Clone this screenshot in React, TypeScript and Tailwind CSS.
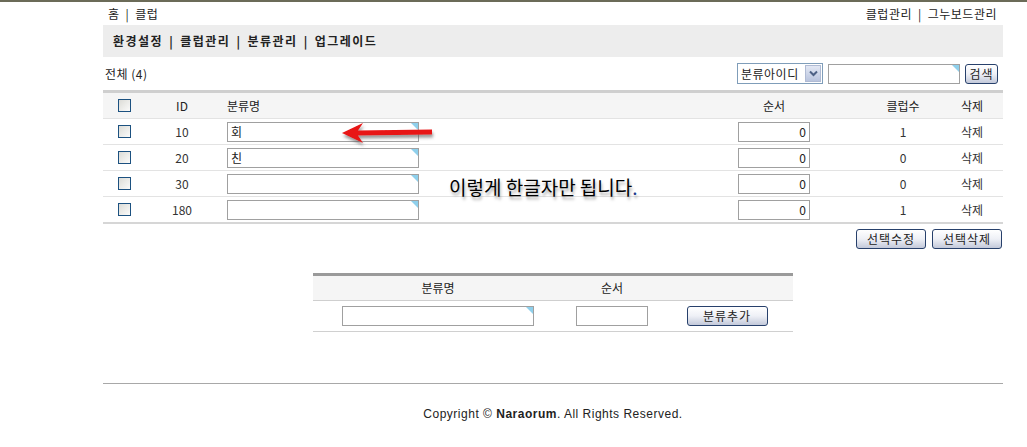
import React from 'react';

const font = { fontFamily: '"Noto Sans CJK KR", "Noto Sans", sans-serif' };

function Check() {
  return (
    <span className="inline-block w-[13px] h-[13px] border border-[#1c5180] bg-gradient-to-br from-[#dcdcd7] to-[#fbfbfa]" />
  );
}

function TextBox({ w, value = '', right = false, ime = true }: { w: string; value?: string; right?: boolean; ime?: boolean }) {
  return (
    <div className={`relative h-[20px] ${w} border border-[#a0a0a0] bg-white`}>
      <div className={`h-full px-[3px] leading-[18px] text-[12px] text-[#222] ${right ? 'text-right' : 'text-left'}`}>{value}</div>
      {ime && (
        <span className="absolute top-0 right-0 w-0 h-0 border-t-[7px] border-t-[#8fd0ec] border-l-[7px] border-l-transparent" />
      )}
    </div>
  );
}

function Btn({ label, w }: { label: string; w: string }) {
  return (
    <button className={`h-[20px] ${w} rounded-[3px] border border-[#27406b] bg-gradient-to-b from-white via-[#eef0f6] to-[#c3c9da] text-[12px] leading-[18px] tracking-[1px] text-[#222]`}>
      {label}
    </button>
  );
}

function Sep() {
  return <span className="px-[6px]">|</span>;
}

const rows = [
  { id: 10, name: '회', count: 1 },
  { id: 20, name: '친', count: 0 },
  { id: 30, name: '', count: 0 },
  { id: 180, name: '', count: 1 },
];

const cols = 'grid grid-cols-[42px_74px_519px_112px_106px_1fr] items-center';

export default function App() {
  return (
    <div className="relative min-h-[447px] bg-white text-[12px] text-[#333]" style={font}>
      <div className="h-[2px] bg-[#6b6b58]" />

      <div className="ml-[103px] w-[900px]">
        {/* top links */}
        <div className="flex justify-between h-[23px] items-center pl-[5px] pr-[6px] text-[#222] tracking-[0.5px]">
          <span>홈<Sep />클럽</span>
          <span>클럽관리<Sep />그누보드관리</span>
        </div>

        {/* nav */}
        <div className="h-[32px] bg-[#ededed] flex items-center pl-[10px] font-bold text-[#222] tracking-[1.5px]">
          환경설정<Sep />클럽관리<Sep />분류관리<Sep />업그레이드
        </div>

        {/* search row */}
        <div className="h-[33px] flex items-center justify-between pl-[2px] pr-[5px]">
          <span className="text-[#222] tracking-[0.5px]">전체 (4)</span>
          <div className="flex items-center gap-[5px]">
            <div className="flex items-center h-[21px] w-[86px] border border-[#7f9db9] bg-white pl-[3px] pr-[1px]">
              <span className="flex-1 text-[#222] tracking-[0.5px]">분류아이디</span>
              <span className="w-[16px] h-[17px] bg-gradient-to-b from-[#e3e8f4] to-[#b9c4de] border border-[#b0bbd4] flex items-center justify-center">
                <svg width="9" height="7" viewBox="0 0 9 7">
                  <path d="M1 1.5 L4.5 5 L8 1.5" stroke="#4d6185" strokeWidth="2" fill="none" />
                </svg>
              </span>
            </div>
            <TextBox w="w-[132px]" />
            <Btn label="검색" w="w-[33px]" />
          </div>
        </div>

        {/* list table */}
        <div className="border-t-[3px] border-[#cfcfcf] border-b-2 border-b-[#d6d6d6]">
          <div className={`${cols} h-[25px] bg-[#f5f5f5] text-[#222]`}>
            <div className="flex justify-center"><Check /></div>
            <div className="text-center">ID</div>
            <div className="pl-[8px]">분류명</div>
            <div className="w-[72px] text-center">순서</div>
            <div className="text-center">클럽수</div>
            <div className="pl-[5px]">삭제</div>
          </div>
          {rows.map((r) => (
            <div key={r.id} className={`${cols} h-[26px] border-t border-[#e3e3e3]`}>
              <div className="flex justify-center"><Check /></div>
              <div className="text-center">{r.id}</div>
              <div className="pl-[8px]"><TextBox w="w-[192px]" value={r.name} /></div>
              <div><TextBox w="w-[72px]" value="0" right ime={false} /></div>
              <div className="text-center">{r.count}</div>
              <div className="pl-[5px]">삭제</div>
            </div>
          ))}
        </div>

        <div className="flex justify-end gap-[6px] pt-[5px] pr-px">
          <Btn label="선택수정" w="w-[70px]" />
          <Btn label="선택삭제" w="w-[70px]" />
        </div>

        {/* add table */}
        <div className="ml-[210px] w-[480px] mt-[24px] border-t-[3px] border-[#9a9a9a] border-b border-b-[#d0d0d0]">
          <div className="grid grid-cols-[250px_98px_1fr] h-[25px] items-center bg-[#f5f5f5] border-b border-[#cfcfcf] text-[#222]">
            <div className="text-center">분류명</div>
            <div className="text-center">순서</div>
            <div />
          </div>
          <div className="grid grid-cols-[250px_98px_1fr] h-[30px] items-center">
            <div className="flex justify-center"><TextBox w="w-[192px]" /></div>
            <div className="flex justify-center"><TextBox w="w-[72px]" ime={false} /></div>
            <div className="flex justify-center"><Btn label="분류추가" w="w-[81px]" /></div>
          </div>
        </div>

        {/* footer */}
        <div className="mt-[51px] border-t border-[#a8a8a8]" />
        <div className="pt-[21px] text-center text-[#222] tracking-[0.5px]" style={{ fontFamily: '"Liberation Sans", Arial, sans-serif' }}>
          Copyright © <b>Naraorum</b>. All Rights Reserved.
        </div>
      </div>

      {/* annotations */}
      <svg className="absolute left-[338px] top-[118px]" width="100" height="32" viewBox="0 0 100 32">
        <defs>
          <filter id="sh" x="-10%" y="-50%" width="120%" height="200%">
            <feDropShadow dx="1" dy="3" stdDeviation="1.5" floodColor="#555" floodOpacity="0.6" />
          </filter>
        </defs>
        <g filter="url(#sh)">
          <path d="M4 15 L25 5 L20 12.5 L94 11.5 L94 16.5 L20 17.5 L25 25 Z" fill="#e81414" />
        </g>
      </svg>
      <div
        className="absolute left-[449px] top-[173px] text-[19px] text-black"
        style={{ textShadow: '1px 3px 3px rgba(0,0,0,0.35)' }}
      >
        이렇게 한글자만 됩니다<span className="text-[#1a3a8a]">.</span>
      </div>
    </div>
  );
}
